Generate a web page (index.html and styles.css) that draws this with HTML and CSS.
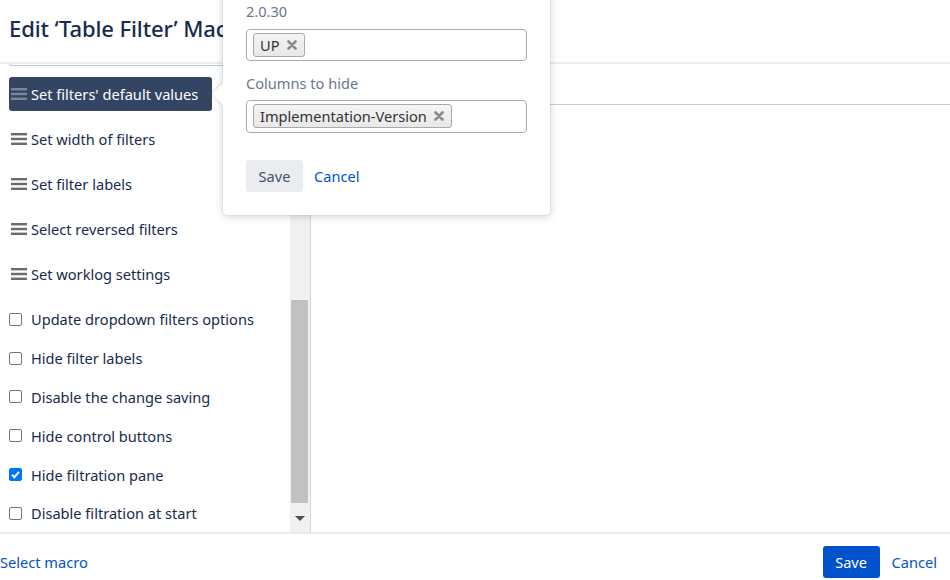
FILE: index.html
```html
<!DOCTYPE html>
<html>
<head>
<meta charset="utf-8">
<link rel="stylesheet" href="styles.css">
</head>
<body>
<div class="page">
  <header class="header">
    <h1 class="title">Edit ‘Table Filter’ Macro</h1>
  </header>
  <div class="main">
    <aside class="sidebar">
      <div class="list">
        <div class="stub"></div>
        <div class="menu">
          <div class="mitem active"><svg class="ham" viewBox="0 0 16 12" width="16" height="12"><rect y="0" width="16" height="2.4"/><rect y="4.8" width="16" height="2.4"/><rect y="9.6" width="16" height="2.4"/></svg><span>Set filters' default values</span></div>
          <div class="mitem"><svg class="ham" viewBox="0 0 16 12" width="16" height="12"><rect y="0" width="16" height="2.4"/><rect y="4.8" width="16" height="2.4"/><rect y="9.6" width="16" height="2.4"/></svg><span>Set width of filters</span></div>
          <div class="mitem"><svg class="ham" viewBox="0 0 16 12" width="16" height="12"><rect y="0" width="16" height="2.4"/><rect y="4.8" width="16" height="2.4"/><rect y="9.6" width="16" height="2.4"/></svg><span>Set filter labels</span></div>
          <div class="mitem"><svg class="ham" viewBox="0 0 16 12" width="16" height="12"><rect y="0" width="16" height="2.4"/><rect y="4.8" width="16" height="2.4"/><rect y="9.6" width="16" height="2.4"/></svg><span>Select reversed filters</span></div>
          <div class="mitem"><svg class="ham" viewBox="0 0 16 12" width="16" height="12"><rect y="0" width="16" height="2.4"/><rect y="4.8" width="16" height="2.4"/><rect y="9.6" width="16" height="2.4"/></svg><span>Set worklog settings</span></div>
        </div>
        <div class="checks">
          <label class="citem"><span class="cb"></span><span>Update dropdown filters options</span></label>
          <label class="citem"><span class="cb"></span><span>Hide filter labels</span></label>
          <label class="citem"><span class="cb"></span><span>Disable the change saving</span></label>
          <label class="citem"><span class="cb"></span><span>Hide control buttons</span></label>
          <label class="citem"><span class="cb checked"><svg viewBox="0 0 13 13" width="13" height="13"><path d="M3 6.8 L5.4 9.2 L10 3.9" fill="none" stroke="#fff" stroke-width="2"/></svg></span><span>Hide filtration pane</span></label>
          <label class="citem"><span class="cb"></span><span>Disable filtration at start</span></label>
        </div>
      </div>
      <div class="scrollbar">
        <div class="sb-space"></div>
        <div class="thumb"></div>
        <div class="arrow"><svg viewBox="0 0 10 6" width="10" height="6"><path d="M0 0 L10 0 L5 5 Z" fill="#505050"/></svg></div>
      </div>
    </aside>
    <section class="preview">
      <div class="preview-bar"></div>
    </section>
  </div>
  <footer class="footer">
    <a class="link">Select macro</a>
    <div class="actions">
      <button class="btn primary">Save</button>
      <a class="link">Cancel</a>
    </div>
  </footer>

  <div class="popup">
    <div class="arrow-left"></div>
    <div class="field-label">2.0.30</div>
    <div class="select"><span class="tag">UP <svg class="x" viewBox="0 0 10 10" width="10" height="10"><path d="M1.5 1.5 L8.5 8.5 M8.5 1.5 L1.5 8.5" stroke="#8A8A8A" stroke-width="2.6" stroke-linecap="round"/></svg></span></div>
    <div class="field-label second">Columns to hide</div>
    <div class="select tall"><span class="tag">Implementation-Version <svg class="x" viewBox="0 0 10 10" width="10" height="10"><path d="M1.5 1.5 L8.5 8.5 M8.5 1.5 L1.5 8.5" stroke="#8A8A8A" stroke-width="2.6" stroke-linecap="round"/></svg></span></div>
    <div class="popup-actions">
      <button class="btn subtle">Save</button>
      <a class="link">Cancel</a>
    </div>
  </div>
</div>
</body>
</html>
```

FILE: styles.css
```css
* { box-sizing: border-box; }
html, body { margin: 0; padding: 0; }
body {
  font-family: "Noto Sans", "Open Sans", sans-serif;
  color: #172B4D;
  background: #fff;
  width: 950px;
  height: 580px;
  overflow: hidden;
}
.page {
  position: relative;
  width: 950px;
  height: 580px;
  display: flex;
  flex-direction: column;
}
.header {
  height: 64px;
  border-bottom: 2px solid #EBECF0;
  padding-left: 9px;
  display: flex;
  align-items: center;
  padding-bottom: 6px;
}
.title {
  margin: 0;
  font-size: 22px;
  font-weight: 500;
  color: #172B4D;
  letter-spacing: -0.1px;
  white-space: nowrap;
}
.main {
  height: 468px;
  display: flex;
}
.sidebar {
  width: 311px;
  display: flex;
  border-right: 1px solid #D4D4D4;
}
.list {
  width: 290px;
  padding: 0 0 0 9px;
  font-size: 14.6px;
}
.stub {
  height: 2px;
  width: 220px;
  border: 1px solid #C1C7D0;
  border-top: none;
  border-radius: 0 0 3px 3px;
}
.menu {
  margin-top: 11px;
  display: flex;
  flex-direction: column;
  gap: 11px;
}
.mitem {
  height: 34px;
  display: flex;
  align-items: center;
  padding-left: 2px;
  gap: 4px;
  color: #172B4D;
}
.mitem.active {
  background: #344563;
  color: #fff;
  border-radius: 3px;
  width: 203px;
}
.ham { fill: #6B6B6B; flex: none; }
.mitem.active .ham { fill: #7A869A; }
.checks {
  margin-top: 9px;
  display: flex;
  flex-direction: column;
}
.citem {
  height: 38.8px;
  display: flex;
  align-items: center;
  gap: 9px;
}
.cb {
  width: 13px;
  height: 13px;
  border: 1px solid #767676;
  border-radius: 2px;
  background: #fff;
  flex: none;
  display: flex;
}
.cb.checked {
  background: #0075FF;
  border-color: #0075FF;
}
.cb.checked svg { margin: -1px; }
.scrollbar {
  width: 20px;
  background: #F1F1F1;
  display: flex;
  flex-direction: column;
  padding: 0 2px 0 1px;
}
.sb-space { height: 236px; }
.thumb {
  height: 203px;
  background: #C1C1C1;
}
.arrow {
  flex: 1;
  display: flex;
  align-items: center;
  justify-content: center;
  padding-top: 2px;
}
.preview { flex: 1; }
.preview-bar {
  height: 41px;
  border-bottom: 1px solid #CCCCCC;
}
.footer {
  flex: 1;
  border-top: 2px solid #EBECF0;
  display: flex;
  justify-content: space-between;
  align-items: center;
  padding: 10px 13px 0 0;
  font-size: 14.6px;
}
.link {
  color: #0052CC;
  cursor: pointer;
}
.actions {
  display: flex;
  align-items: center;
  gap: 12px;
}
.btn {
  font-family: inherit;
  font-size: 14.6px;
  height: 32px;
  width: 57px;
  border: none;
  border-radius: 3px;
  padding: 0;
}
.btn.primary {
  background: #0052CC;
  color: #fff;
}
.btn.subtle {
  background: #EBECF0;
  color: #42526E;
}
.popup {
  position: absolute;
  left: 223px;
  top: -10px;
  width: 327px;
  height: 225px;
  background: #fff;
  border-radius: 4px;
  box-shadow: 0 1px 8px rgba(9, 30, 66, 0.22), 0 0 1px rgba(9, 30, 66, 0.31);
  padding: 11px 23px 0 23px;
  font-size: 14.6px;
}
.arrow-left {
  position: absolute;
  left: -8px;
  top: 96px;
  width: 16px;
  height: 16px;
  background: #fff;
  transform: rotate(45deg);
  box-shadow: -1px 1px 2px rgba(9, 30, 66, 0.12);
}
.field-label {
  color: #6B778C;
  height: 20px;
  line-height: 20px;
}
.field-label.second { margin-top: 12px; }
.select {
  margin-top: 8px;
  height: 32px;
  width: 281px;
  border: 1px solid #AAAAAA;
  border-radius: 4px;
  padding: 3px 6px;
  display: flex;
  align-items: flex-start;
}
.select.tall {
  margin-top: 7px;
  height: 33px;
}
.tag {
  height: 24px;
  display: inline-flex;
  align-items: center;
  gap: 7px;
  padding: 0 7px 0 6px;
  border: 1px solid #AAAAAA;
  border-radius: 3px;
  background: linear-gradient(#F4F4F4, #E8E8E8);
  color: #333;
  font-size: 14.6px;
}
.tag .x { flex: none; }
.popup-actions {
  margin-top: 27px;
  display: flex;
  align-items: center;
  gap: 11px;
}
```
